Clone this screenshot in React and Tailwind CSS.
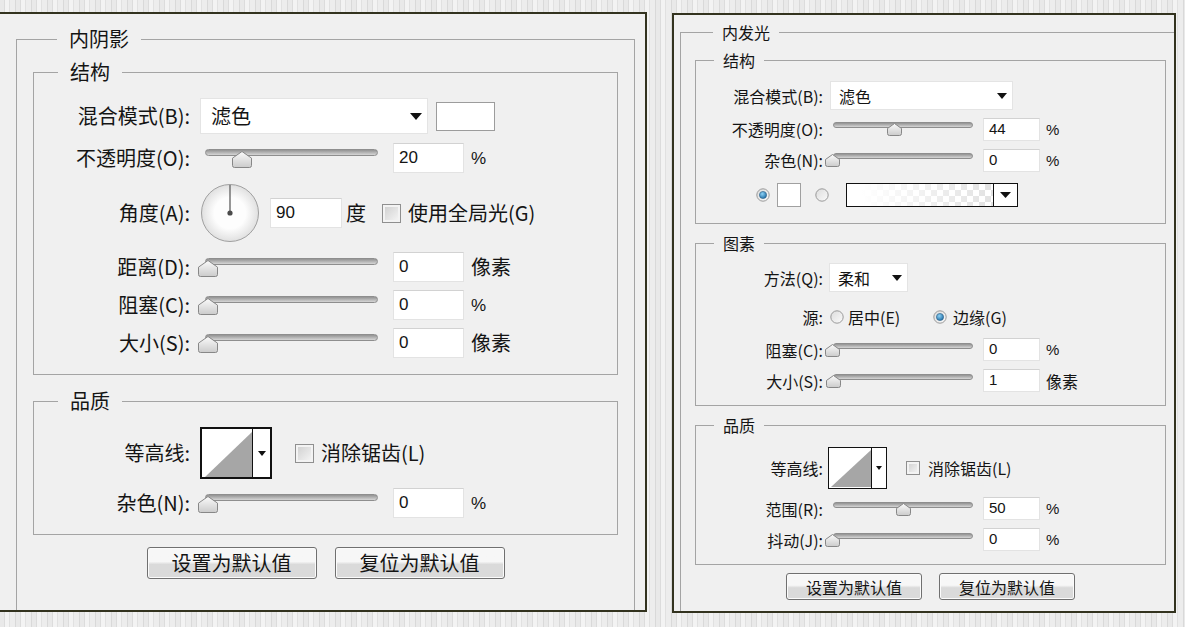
import React from 'react'

const CJK = "font-['Noto_Sans_CJK_SC','Noto_Sans_CJK_JP',sans-serif]"
const NUM = "font-['Liberation_Sans','DejaVu_Sans',sans-serif]"

function Arrow({ w = 12, h = 7 }) {
  return (
    <svg width={w} height={h} viewBox={`0 0 ${w} ${h}`} className="shrink-0">
      <path d={`M0 0H${w}L${w / 2} ${h}Z`} fill="#111" />
    </svg>
  )
}

function Thumb({ big, pct }) {
  const w = big ? 20 : 15
  const h = big ? 17 : 13
  const travel = big ? 170 : 142
  const id = big ? 'thumbBig' : 'thumbSmall'
  const s = h * 0.42
  return (
    <svg
      width={w}
      height={h}
      viewBox={`0 0 ${w} ${h}`}
      className={`absolute ${big ? 'top-[2px]' : 'top-[1px]'}`}
      style={{ left: Math.round((pct / 100) * travel) }}
    >
      <defs>
        <linearGradient id={id} x1="0" y1="0" x2="0" y2="1">
          <stop offset="0" stopColor="#fbfbfb" />
          <stop offset="1" stopColor="#cbcbcb" />
        </linearGradient>
      </defs>
      <path
        d={`M0.5 ${s}L${w / 2} 0.5L${w - 0.5} ${s}V${h - 2.5}Q${w - 0.5} ${h - 0.5} ${w - 2.5} ${h - 0.5}H2.5Q0.5 ${h - 0.5} 0.5 ${h - 2.5}Z`}
        fill={`url(#${id})`}
        stroke="#878787"
      />
    </svg>
  )
}

function Slider({ big, pct }) {
  return (
    <div className={`relative shrink-0 ${big ? 'ml-[8px] h-[19px] w-[180px]' : 'ml-[2px] h-[14px] w-[148px]'}`}>
      <div
        className={`absolute right-0 top-0 rounded-full border border-[#8e8e8e] bg-linear-to-b from-[#939393] to-[#d6d6d6] ${big ? 'left-[7px] h-[7px]' : 'left-[8px] h-[6px]'}`}
      />
      <Thumb big={big} pct={pct} />
    </div>
  )
}

function Input({ big, value, className = '' }) {
  return (
    <div
      className={`flex shrink-0 items-center border border-[#e3e3e3] border-t-[#d2d2d2] bg-white ${NUM} ${big ? 'h-[30px] w-[71px] pl-[5px] text-[17px]' : 'h-[23px] w-[57px] pl-[5px] text-[15px]'} ${className}`}
    >
      {value}
    </div>
  )
}

function Checkbox({ big, className = '' }) {
  return (
    <div
      className={`shrink-0 border border-[#8f8f8f] bg-linear-to-br from-[#cdcdcd] to-[#f8f8f8] shadow-[inset_0_0_0_2px_#f3f3f3] ${big ? 'h-[19px] w-[19px]' : 'h-[14px] w-[14px]'} ${className}`}
    />
  )
}

function Radio({ checked, className = '' }) {
  return (
    <svg width="14" height="14" viewBox="0 0 14 14" className={`shrink-0 ${className}`}>
      <defs>
        <linearGradient id="radioBg" x1="0" y1="0" x2="1" y2="1">
          <stop offset="0" stopColor="#dcdcdc" />
          <stop offset="1" stopColor="#fbfbfb" />
        </linearGradient>
        <radialGradient id="radioDot" cx="0.4" cy="0.35" r="0.7">
          <stop offset="0" stopColor="#8fd2f5" />
          <stop offset="1" stopColor="#1a6aa3" />
        </radialGradient>
      </defs>
      <circle cx="7" cy="7" r="6.2" fill="url(#radioBg)" stroke="#9a9a9a" />
      {checked && <circle cx="7" cy="7" r="3.6" fill="url(#radioDot)" stroke="#2f5f85" strokeWidth="0.6" />}
    </svg>
  )
}

function Dropdown({ big, value, className = '' }) {
  return (
    <div
      className={`flex shrink-0 items-center justify-between border border-[#e4e4e4] bg-white ${big ? 'pl-[10px] pr-[5px] text-[20px]' : 'pl-[8px] pr-[5px] text-[16px]'} ${className}`}
    >
      <span className="leading-none">{value}</span>
      {big ? <Arrow w={12} h={7} /> : <Arrow w={10} h={6} />}
    </div>
  )
}

function Contour({ big, className = '' }) {
  return (
    <div
      className={`flex shrink-0 border-[#111] bg-white ${big ? 'h-[52px] w-[72px] border-2' : 'h-[42px] w-[59px] border-[1.5px]'} ${className}`}
    >
      <svg
        width={big ? 50 : 42}
        height={big ? 48 : 39}
        viewBox={big ? '0 0 50 48' : '0 0 42 39'}
        className="shrink-0"
      >
        {big ? <path d="M3 48L50 3V48Z" fill="#a6a6a6" /> : <path d="M2 39L42 2V39Z" fill="#a6a6a6" />}
      </svg>
      <div className="flex flex-1 items-center justify-center border-l border-[#111]">
        {big ? <Arrow w={8} h={5} /> : <Arrow w={6} h={4} />}
      </div>
    </div>
  )
}

function Group({ big, title, className = '', children }) {
  return (
    <fieldset className={`border border-[#a4a4a4] ${className}`}>
      <legend
        className={
          big
            ? 'ml-[24px] px-[12px] text-[20px] leading-[24px]'
            : 'ml-[18px] px-[9px] text-[16px] leading-[20px]'
        }
      >
        {title}
      </legend>
      {children}
    </fieldset>
  )
}

function LRow({ label, className = '', children }) {
  return (
    <div className={`flex items-center text-[20px] ${className}`}>
      <div className="w-[156px] shrink-0 text-right leading-none">{label}</div>
      {children}
    </div>
  )
}

function RRow({ label, className = '', children }) {
  return (
    <div className={`flex items-center text-[16px] ${className}`}>
      <div className="w-[127px] shrink-0 text-right leading-none">{label}</div>
      {children}
    </div>
  )
}

function LSlider({ label, pct, unit, className }) {
  return (
    <LRow label={label} className={`h-[30px] ${className}`}>
      <Slider big pct={pct} />
      <Input big value={String(pct)} className="ml-[15px]" />
      <span className={`ml-[7px] leading-none ${unit === '%' ? NUM + ' text-[17px]' : ''}`}>{unit}</span>
    </LRow>
  )
}

function RSlider({ label, pct, unit, className }) {
  return (
    <RRow label={label} className={`h-[23px] ${className}`}>
      <Slider pct={pct} />
      <Input value={String(pct)} className="ml-[10px]" />
      <span className={`ml-[6px] leading-none ${unit === '%' ? NUM + ' text-[15px]' : ''}`}>{unit}</span>
    </RRow>
  )
}

function Button({ big, children }) {
  return (
    <div
      className={`flex shrink-0 items-center justify-center rounded-[3px] border border-[#707070] bg-linear-to-b from-[#f7f7f7] from-45% to-[#dadada] to-55% shadow-[inset_0_0_0_1px_#fbfbfb] leading-none ${big ? 'h-[32px] w-[170px] text-[20px]' : 'h-[27px] w-[136px] text-[16px]'}`}
    >
      {children}
    </div>
  )
}

function Dial() {
  return (
    <svg width="60" height="60" viewBox="0 0 60 60" className="shrink-0">
      <defs>
        <radialGradient id="dialG" cx="0.5" cy="0.5" r="0.5">
          <stop offset="0.55" stopColor="#fdfdfd" />
          <stop offset="1" stopColor="#e0e0e0" />
        </radialGradient>
      </defs>
      <circle cx="30" cy="30" r="28.5" fill="url(#dialG)" stroke="#a0a0a0" />
      <line x1="30" y1="30" x2="30" y2="2" stroke="#6a6a6a" strokeWidth="1.4" />
      <circle cx="30" cy="30" r="2.6" fill="#4a4a4a" />
    </svg>
  )
}

export default function App() {
  return (
    <div
      className={`flex h-[627px] w-[1185px] overflow-hidden bg-[image:repeating-linear-gradient(90deg,#e9e9e9_0px,#e9e9e9_4px,#dcdcdc_4px,#dcdcdc_5px,#f3f3f3_5px,#f3f3f3_9px,#e1e1e1_9px,#e1e1e1_10px,#ededed_10px,#ededed_15px,#d9d9d9_15px,#d9d9d9_16px)] text-[#141414] ${CJK}`}
    >
      {/* 内阴影 */}
      <div className="mt-[12px] h-[600px] w-[647px] shrink-0 overflow-hidden border-y-2 border-r-2 border-[#33331f] bg-[#f0f0f0]">
        <Group big title="内阴影" className="ml-[16px] mt-[13px] h-[660px] w-[619px] px-[16px]">
          <Group big title="结构" className="mt-[9px] pb-[16px]">
            <LRow label="混合模式(B):" className="mt-[14px] h-[36px]">
              <Dropdown big value="滤色" className="ml-[10px] h-[36px] w-[228px]" />
              <div className="ml-[8px] h-[29px] w-[59px] shrink-0 border border-[#9c9c9c] bg-white" />
            </LRow>
            <LSlider label="不透明度(O):" pct={20} unit="%" className="mt-[9px]" />
            <LRow label="角度(A):" className="mt-[9px] h-[62px]">
              <div className="ml-[10px]">
                <Dial />
              </div>
              <Input big value="90" className="ml-[10px] w-[72px]" />
              <span className="ml-[4px] leading-none">度</span>
              <Checkbox big className="ml-[16px]" />
              <span className="ml-[7px] leading-none">使用全局光(G)</span>
            </LRow>
            <LSlider label="距离(D):" pct={0} unit="像素" className="mt-[8px]" />
            <LSlider label="阻塞(C):" pct={0} unit="%" className="mt-[8px]" />
            <LSlider label="大小(S):" pct={0} unit="像素" className="mt-[8px]" />
          </Group>

          <Group big title="品质" className="mt-[14px] pb-[16px]">
            <LRow label="等高线:" className="mt-[14px] h-[52px]">
              <Contour big className="ml-[10px]" />
              <Checkbox big className="ml-[23px]" />
              <span className="ml-[7px] leading-none">消除锯齿(L)</span>
            </LRow>
            <LSlider label="杂色(N):" pct={0} unit="%" className="mt-[9px]" />
          </Group>

          <div className="mt-[12px] flex justify-center gap-[18px]">
            <Button big>设置为默认值</Button>
            <Button big>复位为默认值</Button>
          </div>
        </Group>
      </div>

      {/* 内发光 */}
      <div className="ml-[25px] mt-[13px] h-[600px] w-[504px] shrink-0 overflow-hidden border-2 border-[#33331f] bg-[#f0f0f0]">
        <Group title="内发光" className="ml-[6px] mt-[7px] h-[660px] w-[501px] px-[14px]">
          <Group title="结构" className="mt-[8px] pb-[16px]">
            <RRow label="混合模式(B):" className="mt-[11px] h-[29px]">
              <Dropdown value="滤色" className="ml-[7px] h-[29px] w-[183px]" />
            </RRow>
            <RSlider label="不透明度(O):" pct={44} unit="%" className="mt-[7px] h-[24px]" />
            <RSlider label="杂色(N):" pct={0} unit="%" className="mt-[7px] h-[24px]" />
            <div className="mt-[10px] flex h-[25px] items-center pl-[60px]">
              <Radio checked />
              <div className="ml-[7px] h-[24px] w-[24px] shrink-0 border border-[#a0a0a0] bg-white" />
              <Radio className="ml-[14px]" />
              <div className="ml-[17px] flex h-[24px] w-[172px] shrink-0 border border-[#111]">
                <div className="flex-1 bg-[image:repeating-conic-gradient(#e2e2e2_0_25%,#ffffff_0_50%)] bg-[length:12px_12px]">
                  <div className="h-full w-full bg-linear-to-r from-white from-10% to-white/0" />
                </div>
                <div className="flex w-[24px] items-center justify-center border-l border-[#111] bg-white">
                  <Arrow w={11} h={6} />
                </div>
              </div>
            </div>
          </Group>

          <Group title="图素" className="mt-[9px] pb-[13px]">
            <RRow label="方法(Q):" className="mt-[10px] h-[29px]">
              <Dropdown value="柔和" className="ml-[6px] h-[29px] w-[79px]" />
            </RRow>
            <RRow label="源:" className="mt-[15px] h-[20px]">
              <Radio className="ml-[7px]" />
              <span className="ml-[4px] w-[85px] shrink-0 leading-none">居中(E)</span>
              <Radio checked />
              <span className="ml-[6px] leading-none">边缘(G)</span>
            </RRow>
            <RSlider label="阻塞(C):" pct={0} unit="%" className="mt-[11px]" />
            <RSlider label="大小(S):" pct={1} unit="像素" className="mt-[8px]" />
          </Group>

          <Group title="品质" className="mt-[9px] pb-[13px]">
            <RRow label="等高线:" className="mt-[12px] h-[42px]">
              <Contour className="ml-[5px]" />
              <Checkbox className="ml-[19px]" />
              <span className="ml-[8px] leading-none">消除锯齿(L)</span>
            </RRow>
            <RSlider label="范围(R):" pct={50} unit="%" className="mt-[8px]" />
            <RSlider label="抖动(J):" pct={0} unit="%" className="mt-[8px]" />
          </Group>

          <div className="mt-[8px] flex justify-center gap-[17px]">
            <Button>设置为默认值</Button>
            <Button>复位为默认值</Button>
          </div>
        </Group>
      </div>
    </div>
  )
}
